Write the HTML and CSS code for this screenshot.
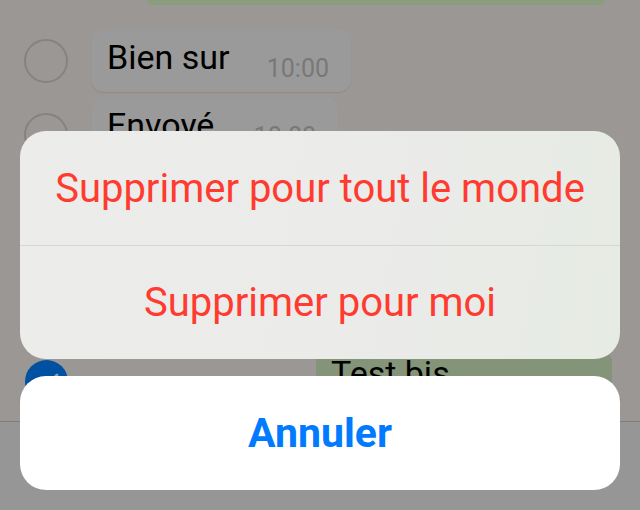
FILE: index.html
```html
<!DOCTYPE html>
<html lang="fr">
<head>
<meta charset="utf-8">
<link rel="stylesheet" href="styles.css">
</head>
<body>
<div class="screen">
  <div class="chat">
    <div class="out-top"></div>
    <div class="row">
      <span class="radio"></span>
      <div class="bubble in">
        <span class="msg">Bien sur</span>
        <span class="time">10:00</span>
      </div>
    </div>
    <div class="row second">
      <span class="radio"></span>
      <div class="bubble in narrow">
        <span class="msg">Envoyé</span>
        <span class="time">10:00</span>
      </div>
    </div>
    <div class="row third">
      <span class="check">
        <svg viewBox="0 0 43 43" width="43" height="43"><path d="M12 22 L19 29 L32 15" fill="none" stroke="#9a9a9a" stroke-width="3" stroke-linecap="round" stroke-linejoin="round"/></svg>
      </span>
      <div class="bubble out">
        <span class="msg">Test bis</span>
      </div>
    </div>
  </div>
  <div class="toolbar">
    <span class="tool-dot"></span>
  </div>

  <div class="sheet">
    <div class="group">
      <div class="action">Supprimer pour tout le monde</div>
      <div class="action">Supprimer pour moi</div>
    </div>
    <div class="cancel">Annuler</div>
  </div>
</div>
</body>
</html>
```

FILE: styles.css
```css
* { box-sizing: border-box; }
html, body { margin: 0; padding: 0; }
body {
  width: 640px;
  height: 510px;
  overflow: hidden;
  font-family: Roboto, "Liberation Sans", sans-serif;
}
.screen {
  position: relative;
  width: 640px;
  height: 510px;
  display: flex;
  flex-direction: column;
  background: #9a9794;
}
.chat {
  flex: 1;
  display: flex;
  flex-direction: column;
  overflow: hidden;
}
.out-top {
  margin-left: 147px;
  width: 458px;
  height: 5px;
  flex: none;
  background: #8a9d7d;
  border-radius: 0 0 12px 12px;
}
.row {
  display: flex;
  align-items: center;
  margin-top: 24px;
  height: 63px;
  flex: none;
}
.row.second { margin-top: 5px; height: 80px; align-items: flex-start; }
.row.third { margin-top: 183px; height: 50px; align-items: flex-start; }
.radio {
  width: 44px;
  height: 44px;
  margin-left: 24px;
  margin-right: 23px;
  border: 2px solid #858280;
  border-radius: 50%;
  flex: none;
}
.row.second .radio { margin-top: 16px; }
.check {
  width: 43px;
  height: 43px;
  margin-left: 25px;
  border-radius: 50%;
  background: #0051a1;
  flex: none;
}
.check svg { display: block; }
.bubble {
  position: relative;
  height: 63px;
  border-radius: 13px;
  display: flex;
  align-items: flex-start;
  justify-content: space-between;
}
.bubble.in {
  width: 260px;
  background: #9b9a9a;
  box-shadow: 0 1px 1px rgba(0,0,0,0.08);
  padding: 8px 22px 0 16px;
}
.bubble.narrow { width: 247px; height: 80px; }
.bubble.out {
  margin-left: auto;
  margin-right: 28px;
  margin-top: -10px;
  width: 296px;
  height: 50px;
  background: #849479;
  border-radius: 12px 12px 0 12px;
  padding: 3px 15px;
}
.bubble.out::after {
  content: "";
  position: absolute;
  right: -10px;
  bottom: 0;
  width: 0;
  height: 0;
  border-left: 12px solid #849479;
  border-top: 10px solid transparent;
}
.msg {
  font-size: 34px;
  line-height: 40px;
  color: #000;
}
.time {
  font-size: 25px;
  line-height: 26px;
  color: #787878;
  margin-top: 19px;
}
.toolbar {
  position: relative;
  height: 89px;
  flex: none;
  background: #969696;
  border-top: 1px solid #7e7e7e;
}
.tool-dot {
  position: absolute;
  left: 25px;
  top: 25px;
  width: 43px;
  height: 43px;
  border-radius: 50%;
  background: #0051a1;
}
.sheet {
  position: absolute;
  left: 20px;
  top: 131px;
  width: 600px;
  display: flex;
  flex-direction: column;
  gap: 17px;
}
.group {
  border-radius: 26px;
  overflow: hidden;
  background: linear-gradient(100deg, #ececeb 0%, #ebebea 55%, #e6ebe3 100%);
}
.action {
  height: 114px;
  display: flex;
  align-items: center;
  justify-content: center;
  color: #ff3b30;
  font-size: 40px;
}
.action + .action { border-top: 1px solid #d6d6d5; }
.cancel {
  height: 114px;
  border-radius: 26px;
  background: #ffffff;
  display: flex;
  align-items: center;
  justify-content: center;
  color: #007aff;
  font-size: 41px;
  font-weight: 700;
}
```
